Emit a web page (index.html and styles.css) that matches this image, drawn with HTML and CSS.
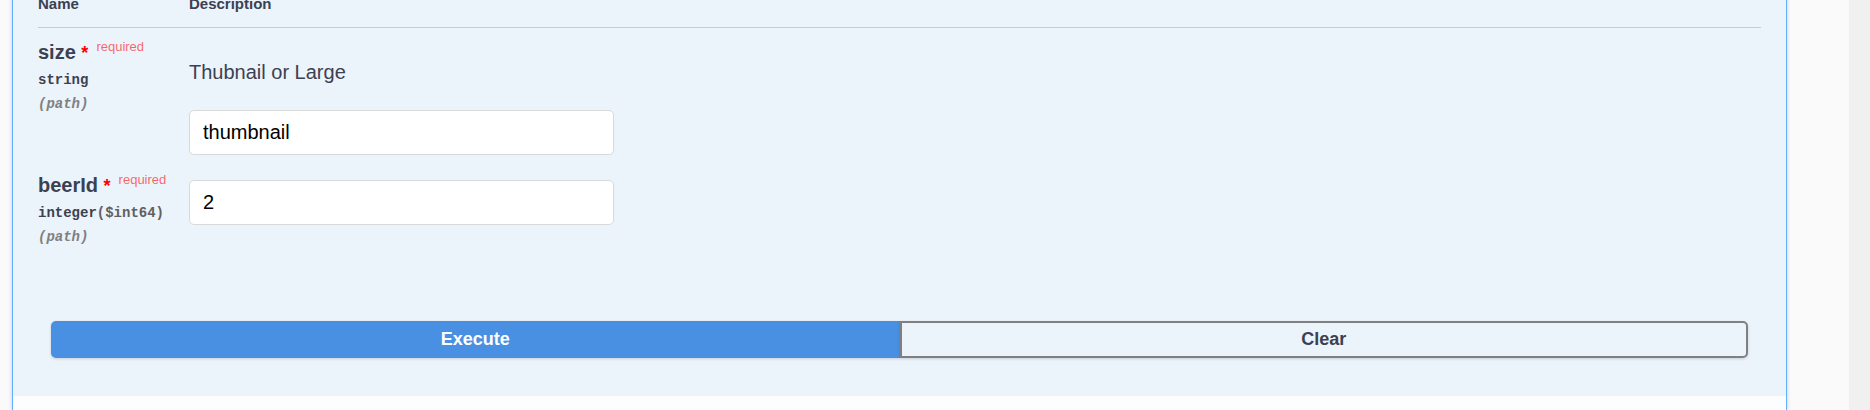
FILE: index.html
```html
<!DOCTYPE html>
<html lang="en">
<head>
<meta charset="utf-8">
<title>API operation</title>
<link rel="stylesheet" href="styles.css">
</head>
<body>
<main class="page">
  <form class="opblock">
    <div class="opblock-body">
      <table class="parameters">
        <thead>
          <tr><th class="col-name">Name</th><th>Description</th></tr>
        </thead>
        <tbody>
          <tr>
            <td>
              <label class="param-name" for="size">size <span class="star">*</span><span class="required">required</span></label>
              <div class="param-type">string</div>
              <div class="param-in">(path)</div>
            </td>
            <td>
              <p class="description">Thubnail or Large</p>
              <input class="param-input" id="size" type="text" value="thumbnail">
            </td>
          </tr>
          <tr>
            <td>
              <label class="param-name" for="beer-id">beerId <span class="star">*</span><span class="required">required</span></label>
              <div class="param-type">integer<span class="format">($int64)</span></div>
              <div class="param-in">(path)</div>
            </td>
            <td>
              <input class="param-input" id="beer-id" type="text" value="2">
            </td>
          </tr>
        </tbody>
      </table>
      <div class="buttons">
        <button class="btn execute" type="button">Execute</button>
        <button class="btn clear" type="button">Clear</button>
      </div>
    </div>
    <div class="responses"></div>
  </form>
</main>
<div class="scroll-track"></div>
</body>
</html>
```
FILE: styles.css
```css
* {
  box-sizing: border-box;
}

body {
  display: flex;
  height: 100vh;
  margin: 0;
  overflow: hidden;
  background: #fafafa;
  color: #3b4151;
  font-family: "Liberation Sans", Arial, sans-serif;
}

.page {
  display: flex;
  flex: 1;
  flex-direction: column;
  padding: 0 62px 0 12px;
}

.scroll-track {
  width: 21px;
  background: #f0f0f0;
}

.opblock {
  display: flex;
  flex: 1;
  flex-direction: column;
  margin-top: -24px;
  border: solid #61affe;
  border-width: 0 1px;
  box-shadow: 0 0 4px rgba(0, 0, 0, 0.19);
}

.opblock-body {
  padding: 0 25px 38px;
  background: #ebf3fb;
}

.responses {
  flex: 1;
  background: #fcfdff;
}

.parameters {
  width: 100%;
  border-collapse: separate;
  border-spacing: 0;
}

.parameters th {
  padding: 18px 0 13px;
  border-bottom: 1px solid #c4cbd9;
  font-size: 15px;
  line-height: 20px;
  text-align: left;
}

.parameters td {
  padding: 12px 0 6px;
  vertical-align: top;
}

.parameters .col-name {
  width: 151px;
}

.param-name {
  display: block;
  font-size: 20px;
  font-weight: 700;
  line-height: 24px;
  white-space: nowrap;
}

.star {
  color: #f00;
  font-size: 18px;
}

.required {
  margin-left: 8px;
  color: rgba(255, 0, 0, 0.6);
  font-size: 13px;
  font-weight: 400;
  line-height: 1;
  vertical-align: 8px;
}

.param-type,
.param-in {
  font-family: "Liberation Mono", Consolas, monospace;
  font-size: 14px;
  font-weight: 700;
  line-height: 24px;
}

.param-type {
  margin-top: 3px;
}

.format {
  color: #606060;
}

.param-in {
  color: #808080;
  font-style: italic;
}

.description {
  margin: 20px 0 26px;
  font-size: 20px;
  line-height: 24px;
}

.param-input {
  display: block;
  width: 425px;
  max-width: 100%;
  height: 45px;
  margin: 7px 0 0;
  padding: 0 13px;
  border: 1px solid #d9d9d9;
  border-radius: 5px;
  background: #fff;
  color: #000;
  font-family: inherit;
  font-size: 20px;
}

.buttons {
  display: flex;
  padding: 66px 13px 0;
}

.btn {
  flex: 1;
  height: 37px;
  padding: 0;
  border: 2px solid #808080;
  border-radius: 5px;
  background: transparent;
  box-shadow: 0 1px 3px rgba(0, 0, 0, 0.15);
  color: #3b4151;
  font-family: inherit;
  font-size: 18px;
  font-weight: 700;
}

.execute {
  border-color: #4990e2;
  border-radius: 5px 0 0 5px;
  background: #4990e2;
  color: #fff;
}

.clear {
  border-radius: 0 5px 5px 0;
}
```
